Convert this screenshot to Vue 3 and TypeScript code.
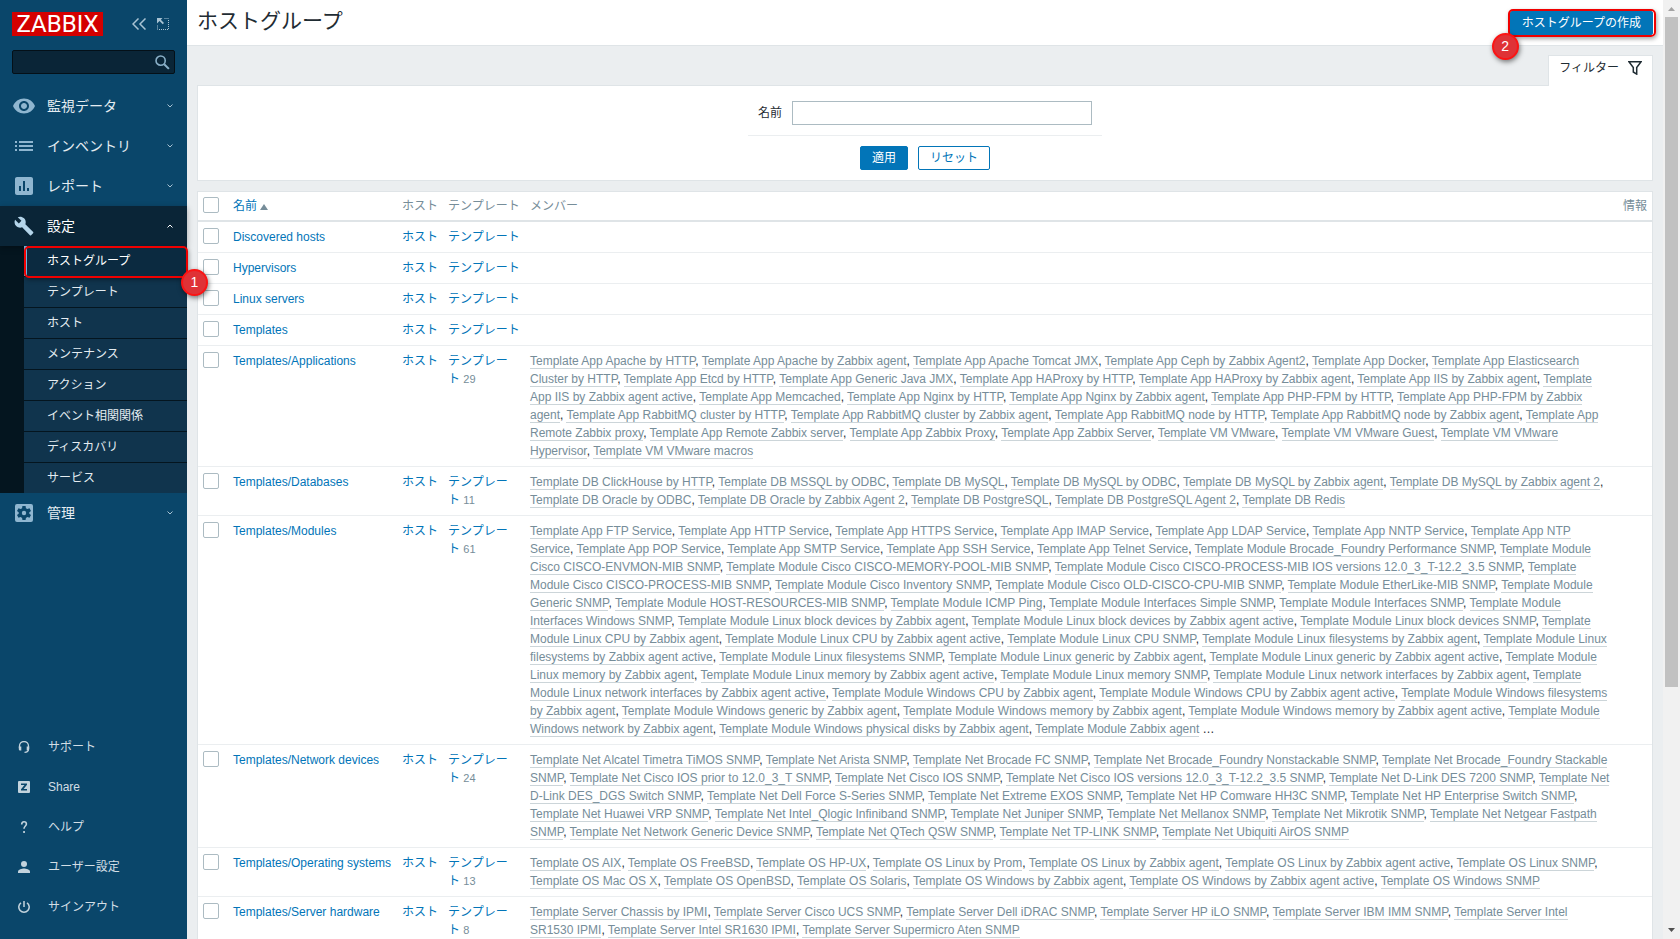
<script setup lang="ts">
import { ref } from 'vue'

interface NavItem { label: string; icon: string }
interface Group { name: string; count?: number; members: string[]; more?: boolean }

const topNav: NavItem[] = [
  { label: '監視データ', icon: 'eye' },
  { label: 'インベントリ', icon: 'list' },
  { label: 'レポート', icon: 'report' },
]
const subNav: string[] = [
  'ホストグループ', 'テンプレート', 'ホスト', 'メンテナンス',
  'アクション', 'イベント相関関係', 'ディスカバリ', 'サービス',
]
const userNav: NavItem[] = [
  { label: 'サポート', icon: 'support' },
  { label: 'Share', icon: 'share' },
  { label: 'ヘルプ', icon: 'help' },
  { label: 'ユーザー設定', icon: 'user' },
  { label: 'サインアウト', icon: 'power' },
]

const list = (prefix: string, names: string): string[] =>
  names.split(', ').map((n) => `Template ${prefix}${n}`)

const groups: Group[] = [
  { name: 'Discovered hosts', members: [] },
  { name: 'Hypervisors', members: [] },
  { name: 'Linux servers', members: [] },
  { name: 'Templates', members: [] },
  {
    name: 'Templates/Applications',
    count: 29,
    members: [
      ...list('App ', 'Apache by HTTP, Apache by Zabbix agent, Apache Tomcat JMX, Ceph by Zabbix Agent2, Docker, Elasticsearch Cluster by HTTP, Etcd by HTTP, Generic Java JMX, HAProxy by HTTP, HAProxy by Zabbix agent, IIS by Zabbix agent, IIS by Zabbix agent active, Memcached, Nginx by HTTP, Nginx by Zabbix agent, PHP-FPM by HTTP, PHP-FPM by Zabbix agent, RabbitMQ cluster by HTTP, RabbitMQ cluster by Zabbix agent, RabbitMQ node by HTTP, RabbitMQ node by Zabbix agent, Remote Zabbix proxy, Remote Zabbix server, Zabbix Proxy, Zabbix Server'),
      ...list('VM ', 'VMware, VMware Guest, VMware Hypervisor, VMware macros'),
    ],
  },
  {
    name: 'Templates/Databases',
    count: 11,
    members: list('DB ', 'ClickHouse by HTTP, MSSQL by ODBC, MySQL, MySQL by ODBC, MySQL by Zabbix agent, MySQL by Zabbix agent 2, Oracle by ODBC, Oracle by Zabbix Agent 2, PostgreSQL, PostgreSQL Agent 2, Redis'),
  },
  {
    name: 'Templates/Modules',
    count: 61,
    more: true,
    members: [
      ...list('App ', 'FTP Service, HTTP Service, HTTPS Service, IMAP Service, LDAP Service, NNTP Service, NTP Service, POP Service, SMTP Service, SSH Service, Telnet Service'),
      ...list('Module ', 'Brocade_Foundry Performance SNMP, Cisco CISCO-ENVMON-MIB SNMP, Cisco CISCO-MEMORY-POOL-MIB SNMP, Cisco CISCO-PROCESS-MIB IOS versions 12.0_3_T-12.2_3.5 SNMP, Cisco CISCO-PROCESS-MIB SNMP, Cisco Inventory SNMP, Cisco OLD-CISCO-CPU-MIB SNMP, EtherLike-MIB SNMP, Generic SNMP, HOST-RESOURCES-MIB SNMP, ICMP Ping, Interfaces Simple SNMP, Interfaces SNMP, Interfaces Windows SNMP, Linux block devices by Zabbix agent, Linux block devices by Zabbix agent active, Linux block devices SNMP, Linux CPU by Zabbix agent, Linux CPU by Zabbix agent active, Linux CPU SNMP, Linux filesystems by Zabbix agent, Linux filesystems by Zabbix agent active, Linux filesystems SNMP, Linux generic by Zabbix agent, Linux generic by Zabbix agent active, Linux memory by Zabbix agent, Linux memory by Zabbix agent active, Linux memory SNMP, Linux network interfaces by Zabbix agent, Linux network interfaces by Zabbix agent active, Windows CPU by Zabbix agent, Windows CPU by Zabbix agent active, Windows filesystems by Zabbix agent, Windows generic by Zabbix agent, Windows memory by Zabbix agent, Windows memory by Zabbix agent active, Windows network by Zabbix agent, Windows physical disks by Zabbix agent, Zabbix agent'),
    ],
  },
  {
    name: 'Templates/Network devices',
    count: 24,
    members: list('Net ', 'Alcatel Timetra TiMOS SNMP, Arista SNMP, Brocade FC SNMP, Brocade_Foundry Nonstackable SNMP, Brocade_Foundry Stackable SNMP, Cisco IOS prior to 12.0_3_T SNMP, Cisco IOS SNMP, Cisco IOS versions 12.0_3_T-12.2_3.5 SNMP, D-Link DES 7200 SNMP, D-Link DES_DGS Switch SNMP, Dell Force S-Series SNMP, Extreme EXOS SNMP, HP Comware HH3C SNMP, HP Enterprise Switch SNMP, Huawei VRP SNMP, Intel_Qlogic Infiniband SNMP, Juniper SNMP, Mellanox SNMP, Mikrotik SNMP, Netgear Fastpath SNMP, Network Generic Device SNMP, QTech QSW SNMP, TP-LINK SNMP, Ubiquiti AirOS SNMP'),
  },
  {
    name: 'Templates/Operating systems',
    count: 13,
    members: list('OS ', 'AIX, FreeBSD, HP-UX, Linux by Prom, Linux by Zabbix agent, Linux by Zabbix agent active, Linux SNMP, Mac OS X, OpenBSD, Solaris, Windows by Zabbix agent, Windows by Zabbix agent active, Windows SNMP'),
  },
  {
    name: 'Templates/Server hardware',
    count: 8,
    members: list('Server ', 'Chassis by IPMI, Cisco UCS SNMP, Dell iDRAC SNMP, HP iLO SNMP, IBM IMM SNMP, Intel SR1530 IPMI, Intel SR1630 IPMI, Supermicro Aten SNMP'),
  },
]

const search = ref('')
const filterName = ref('')
</script>

<template>
  <div class="page">
    <aside class="sidebar">
      <div class="brand">
        <a class="logo" href="#">ZABBIX</a>
        <button class="tool" type="button" aria-label="サイドバーを隠す">
          <svg width="14" height="12" viewBox="0 0 14 12" fill="none" stroke="currentColor" stroke-width="1.5"><path d="M6.5.5 1 6l5.500 5.500M13.500.5 8 6l5.500 5.500" /></svg>
        </button>
        <button class="tool" type="button" aria-label="キオスクモード">
          <svg width="12" height="12" viewBox="0 0 12 12" fill="currentColor">
            <path d="M0 0h5.500L3.800 1.700l3.200 3.200L5.700 6.200 2.500 3 .0 5.500z" />
            <path d="M7.500.5H12M11.500 2v10M.5 7.500V12M2 11.500h10" fill="none" stroke="currentColor" stroke-dasharray="1 1" />
          </svg>
        </button>
      </div>

      <form class="search" role="search" @submit.prevent>
        <input v-model="search" type="text" aria-label="検索" />
        <button type="submit" aria-label="検索">
          <svg width="15" height="15" viewBox="0 0 16 16" fill="none" stroke="currentColor"><circle cx="6" cy="6" r="4.900" stroke-width="1.700" /><path d="m9.800 9.800 5 5" stroke-width="2.200" /></svg>
        </button>
      </form>

      <nav class="main-nav">
        <a v-for="item in topNav" :key="item.label" class="nav-item" href="#">
          <svg v-if="item.icon === 'eye'" class="icon" viewBox="0 0 24 24"><path d="M12 4.500C7 4.500 2.730 7.610 1 12c1.730 4.390 6 7.500 11 7.500s9.270-3.110 11-7.500c-1.730-4.390-6-7.500-11-7.500zM12 17c-2.760 0-5-2.240-5-5s2.240-5 5-5 5 2.240 5 5-2.240 5-5 5zm0-8c-1.660 0-3 1.340-3 3s1.340 3 3 3 3-1.340 3-3-1.340-3-3-3z" /></svg>
          <svg v-else-if="item.icon === 'list'" class="icon" viewBox="0 0 24 24"><path d="M3 7h2v2H3zM3 11h2v2H3zM3 15h2v2H3zM7 7h14v2H7zM7 11h14v2H7zM7 15h14v2H7z" /></svg>
          <svg v-else class="icon" viewBox="0 0 24 24"><path d="M19 3H5c-1.100 0-2 .9-2 2v14c0 1.100.9 2 2 2h14c1.100 0 2-.9 2-2V5c0-1.100-.9-2-2-2zM9 17H7v-5h2v5zm4 0h-2V7h2v10zm4 0h-2v-3h2v3z" /></svg>
          <span>{{ item.label }}</span>
          <svg class="chevron" width="6" height="4" viewBox="0 0 6 4"><path d="m.5.5 2.500 2.500L5.500.5" /></svg>
        </a>

        <div class="open-section">
          <a class="nav-item current" href="#">
            <svg class="icon" viewBox="-2 -2 28 28"><path d="M22.700 19l-9.100-9.100c.9-2.300.4-5-1.500-6.900-2-2-5-2.400-7.400-1.300L9 6 6 9 1.600 4.700C.4 7.100.9 10.100 2.900 12.100c1.900 1.900 4.600 2.400 6.900 1.500l9.100 9.100c.4.4 1 .4 1.400 0l2.300-2.300c.5-.4.5-1.100.1-1.400z" /></svg>
            <span>設定</span>
            <svg class="chevron" width="6" height="4" viewBox="0 0 6 4"><path d="m.5 3.500 2.500-2.500L5.500 3.500" /></svg>
          </a>
          <ul class="submenu">
            <li v-for="(label, i) in subNav" :key="label" :class="{ selected: i === 0 }">
              <a href="#">{{ label }}</a>
              <template v-if="i === 0">
                <span class="ring"></span>
                <span class="marker marker-menu">1</span>
              </template>
            </li>
          </ul>
        </div>

        <a class="nav-item" href="#">
          <svg class="icon" viewBox="0 0 24 24">
            <path fill-rule="evenodd" d="M5 3h14a2 2 0 0 1 2 2v14a2 2 0 0 1-2 2H5a2 2 0 0 1-2-2V5a2 2 0 0 1 2-2zm5.400 2-.3 2.200-1.500.9-2.100-.8L5 10l1.700 1.300v1.500L5 14.100l1.500 2.700 2.100-.8 1.500.9.3 2.100h3.200l.3-2.100 1.500-.9 2.100.8 1.500-2.700-1.700-1.300v-1.500L19 10l-1.500-2.700-2.100.8-1.500-.9-.3-2.200z" />
            <circle cx="12" cy="12" r="2.200" />
          </svg>
          <span>管理</span>
          <svg class="chevron" width="6" height="4" viewBox="0 0 6 4"><path d="m.5.5 2.500 2.500L5.500.5" /></svg>
        </a>
      </nav>

      <nav class="user-nav">
        <a v-for="item in userNav" :key="item.label" href="#">
          <svg v-if="item.icon === 'support'" width="12" height="12" viewBox="0 0 12 12"><path d="M1.500 7V5a4.500 4.500 0 0 1 9 0v3c0 2-1 3.300-4 3.300" fill="none" stroke="currentColor" stroke-width="1.300" /><path d="M.8 5.500h2.500v4H2a1.200 1.200 0 0 1-1.200-1.200zM8.700 5.500h2.500v2.800A1.200 1.200 0 0 1 10 9.500H8.700z" /></svg>
          <svg v-else-if="item.icon === 'share'" width="12" height="12" viewBox="0 0 12 12"><path fill-rule="evenodd" d="M1 0h10a1 1 0 0 1 1 1v10a1 1 0 0 1-1 1H1a1 1 0 0 1-1-1V1a1 1 0 0 1 1-1zm2 2.500V4h3.500L3 8.200v1.300h6V8H5.600L9 3.800V2.500z" /></svg>
          <svg v-else-if="item.icon === 'help'" width="12" height="12" viewBox="0 0 12 12"><path d="M3.700 3.500C3.700 1.700 4.700.8 6 .8s2.400.8 2.400 2.200C8.400 5 6 5 6 7.800" fill="none" stroke="currentColor" stroke-width="1.600" /><path d="M5.200 10h1.700v2H5.200z" /></svg>
          <svg v-else-if="item.icon === 'user'" width="12" height="12" viewBox="0 0 12 12"><circle cx="6" cy="3" r="3" /><path d="M0 12v-1.500C0 8.500 4 7.500 6 7.500s6 1 6 3V12z" /></svg>
          <svg v-else class="stroked" width="12" height="12" viewBox="0 0 12 12"><path d="M6 0v6M3 1.800a5.200 5.200 0 1 0 6 0" /></svg>
          <span>{{ item.label }}</span>
        </a>
      </nav>
    </aside>

    <main class="content">
      <header class="page-head">
        <h1>ホストグループ</h1>
        <div class="create">
          <button class="btn primary" type="button">ホストグループの作成</button>
          <span class="ring"></span>
          <span class="marker marker-create">2</span>
        </div>
      </header>

      <div class="body">
        <section class="filter">
          <div class="tab-row">
            <button class="tab" type="button">
              フィルター
              <svg width="14" height="14" viewBox="0 0 14 14" fill="none" stroke="currentColor" stroke-width="1.500"><path d="M.9.8h12.200L8.700 6.500v6.600L5.300 11V6.500z" /></svg>
            </button>
          </div>
          <form class="filter-form" @submit.prevent>
            <div class="field">
              <label for="filter-name">名前</label>
              <input id="filter-name" v-model="filterName" type="text" />
            </div>
            <div class="actions">
              <button class="btn primary" type="submit">適用</button>
              <button class="btn" type="reset">リセット</button>
            </div>
          </form>
        </section>

        <table class="groups">
          <colgroup>
            <col class="c-check" /><col class="c-name" /><col class="c-host" /><col class="c-tpl" /><col /><col class="c-info" />
          </colgroup>
          <thead>
            <tr>
              <th><input type="checkbox" aria-label="すべて選択" /></th>
              <th><a href="#">名前<span class="sort"></span></a></th>
              <th>ホスト</th>
              <th>テンプレート</th>
              <th>メンバー</th>
              <th>情報</th>
            </tr>
          </thead>
          <tbody>
            <tr v-for="g in groups" :key="g.name">
              <td><input type="checkbox" :aria-label="g.name" /></td>
              <td class="name"><a href="#">{{ g.name }}</a></td>
              <td><a href="#">ホスト</a></td>
              <td><a href="#">テンプレート</a><template v-if="g.count">&nbsp;<span class="count">{{ g.count }}</span></template></td>
              <td><template v-for="(m, i) in g.members" :key="m"><a class="member" href="#">{{ m }}</a>{{ i < g.members.length - 1 ? ', ' : '' }}</template>{{ g.more ? ' …' : '' }}</td>
              <td></td>
            </tr>
          </tbody>
        </table>
      </div>
    </main>

    <div class="scrollbar" aria-hidden="true">
      <svg class="up" width="17" height="17" viewBox="0 0 17 17"><path d="M5 11h7L8.500 7z" /></svg>
      <div class="track"><div class="thumb"></div></div>
      <svg class="down" width="17" height="17" viewBox="0 0 17 17"><path d="M5 6h7l-3.500 4z" /></svg>
    </div>
  </div>
</template>

<style>
body {
  margin: 0;
  overflow: hidden;
}
</style>

<style scoped>
.page {
  display: flex;
  height: 100vh;
  overflow: hidden;
  background: #ebeef0;
  color: #1f2c33;
  font: 12px/18px "Liberation Sans", Arial, "Noto Sans CJK JP", sans-serif;
}
.page *,
.page *::before {
  box-sizing: border-box;
}
a {
  color: #0275b8;
  text-decoration: none;
}
button,
input {
  margin: 0;
  font: inherit;
}
button {
  cursor: pointer;
}

/* Sidebar */
.sidebar {
  position: relative;
  z-index: 1;
  display: flex;
  flex-direction: column;
  flex: none;
  width: 187px;
  background: #0a466a;
}
.brand {
  display: flex;
  align-items: center;
  padding: 12px 18px 0 12px;
  gap: 11px;
}
.logo {
  width: 91px;
  height: 24px;
  margin-right: auto;
  background: #d40000;
  color: #fff;
  font: 24px/24px Roboto, sans-serif;
  text-align: center;
}
.tool {
  display: flex;
  padding: 0;
  border: 0;
  background: none;
  color: #a9c3d3;
}
.search {
  display: flex;
  align-items: center;
  height: 24px;
  margin: 14px 12px 12px;
  border: 1px solid #041018;
  border-radius: 2px;
  background: #0a2537;
}
.search input {
  flex: 1;
  min-width: 0;
  height: 22px;
  padding: 0 5px;
  border: 0;
  outline: 0;
  background: none;
  color: #fff;
}
.search button {
  display: flex;
  padding: 0 4px;
  border: 0;
  background: none;
  color: #8ab0c8;
}
.nav-item {
  display: flex;
  align-items: center;
  height: 40px;
  padding: 0 14px 0 12px;
  color: #e4ecf1;
  font-size: 14px;
}
.icon {
  width: 24px;
  height: 24px;
  margin-right: 11px;
  fill: #8fb6d0;
}
.chevron {
  margin-left: auto;
  fill: none;
  stroke: #a9c3d3;
}
.current {
  position: relative;
  background: #0a2537;
  box-shadow: 0 2px 6px rgba(0, 0, 0, 0.3);
  color: #fff;
}
.current .icon {
  fill: #b4d5ea;
}
.current .chevron {
  stroke: #fff;
}
.submenu {
  margin: 0;
  padding: 0 0 0 24px;
  list-style: none;
  background: #04151f;
}
.submenu li {
  position: relative;
  border-bottom: 1px solid #04151f;
}
.submenu li:last-child {
  border-bottom: 0;
}
.submenu a {
  display: block;
  padding: 6px 0 6px 23px;
  background: #10344d;
  color: #e4ecf1;
}
.submenu .selected a {
  padding-left: 20px;
  border-left: 3px solid #6fb0da;
  background: #0b2a40;
  color: #fff;
}
.user-nav {
  margin-top: auto;
  padding-bottom: 12px;
}
.user-nav a {
  display: flex;
  align-items: center;
  gap: 18px;
  height: 40px;
  padding-left: 18px;
  color: #d3dee5;
}
.user-nav svg {
  fill: currentColor;
  color: #c3d3dd;
}
.user-nav .stroked {
  fill: none;
  stroke: currentColor;
  stroke-width: 1.5;
}

/* Step markers */
.ring {
  position: absolute;
  z-index: 1;
  inset: -1px -1px -2px 0;
  border: 2px solid #f00000;
  border-radius: 5px;
  box-shadow: 1px 2px 4px rgba(0, 0, 0, 0.35);
  pointer-events: none;
}
.submenu .ring {
  inset: 0 -1px -2px 0;
}
.create .ring {
  inset: -2px -3px -2px -2px;
}
.marker {
  position: absolute;
  z-index: 2;
  width: 27px;
  height: 27px;
  border: 2px solid #fb1414;
  border-radius: 50%;
  background: #df3236;
  box-shadow: 1px 2px 5px rgba(0, 0, 0, 0.5);
  color: #fff;
  font-size: 14px;
  line-height: 22px;
  text-align: center;
}
.marker-menu {
  top: 23px;
  right: -21px;
}
.marker-create {
  top: 22px;
  left: -18px;
}

/* Content */
.content {
  flex: 1;
  min-width: 0;
}
.page-head {
  display: flex;
  align-items: flex-start;
  justify-content: space-between;
  height: 46px;
  padding: 11px 10px 0;
  border-bottom: 1px solid #dfe4e7;
  background: #fff;
}
h1 {
  margin: 0;
  font-size: 21px;
  font-weight: 400;
  line-height: 20px;
}
.create {
  position: relative;
}
.btn {
  display: block;
  height: 24px;
  padding: 0 11px;
  border: 1px solid #0275b8;
  border-radius: 2px;
  background: #fff;
  color: #0275b8;
  line-height: 20px;
}
.btn.primary {
  background: #0275b8;
  color: #fff;
}
.body {
  padding: 9px 10px 0;
}
.tab-row {
  display: flex;
  justify-content: flex-end;
}
.tab {
  position: relative;
  display: flex;
  align-items: center;
  gap: 9px;
  height: 31px;
  margin-bottom: -1px;
  padding: 0 10px 6px;
  border: 1px solid #dfe4e7;
  border-bottom: 0;
  background: #fff;
  color: #1f2c33;
}
.filter-form {
  padding: 15px 0 10px;
  border: 1px solid #dfe4e7;
  background: #fff;
}
.field {
  display: flex;
  align-items: center;
  gap: 10px;
  width: 354px;
  margin: 0 auto;
  padding: 0 10px 10px;
  border-bottom: 1px solid #ebeef0;
}
.field input {
  flex: 1;
  min-width: 0;
  height: 24px;
  padding: 0 5px;
  border: 1px solid #acbbc2;
  background: #fff;
}
.actions {
  display: flex;
  justify-content: center;
  gap: 10px;
  padding-top: 10px;
}
.groups {
  width: 100%;
  margin-top: 10px;
  border: 1px solid #dfe4e7;
  border-spacing: 0;
  background: #fff;
  table-layout: fixed;
}
.c-check { width: 30px; }
.c-name { width: 169px; }
.c-host { width: 46px; }
.c-tpl { width: 82px; }
.c-info { width: 34px; }
th,
td {
  padding: 6px 5px;
  border-bottom: 1px solid #ebeef0;
  text-align: left;
  vertical-align: top;
}
th {
  padding: 5px;
  border-bottom: 2px solid #dfe4e7;
  color: #768d99;
  font-weight: 400;
  white-space: nowrap;
}
.name {
  white-space: nowrap;
}
.sort {
  display: inline-block;
  margin-left: 3px;
  border: 4px solid transparent;
  border-top: 0;
  border-bottom: 6px solid #768d99;
}
.groups input {
  display: block;
  width: 16px;
  height: 16px;
  border: 1px solid #acbbc2;
  border-radius: 2px;
  background: #fff;
  appearance: none;
}
.count {
  color: #768d99;
  font-size: 11px;
}
.member {
  border-bottom: 1px solid #ccd5d9;
  color: #768d99;
}

/* Scrollbar */
.scrollbar {
  display: flex;
  flex-direction: column;
  flex: none;
  width: 17px;
  background: #f1f1f1;
}
.track {
  flex: 1;
  padding: 0 2px;
}
.thumb {
  height: 74%;
  background: #c1c1c1;
}
.up {
  fill: #a3a3a3;
}
.down {
  fill: #505050;
}
</style>
